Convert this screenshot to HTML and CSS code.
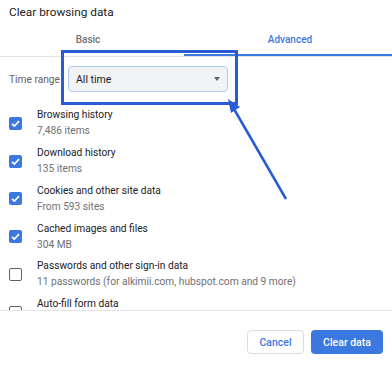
FILE: index.html
```html
<!DOCTYPE html>
<html lang="en">
<head>
  <meta charset="UTF-8" />
  <meta name="viewport" content="width=device-width, initial-scale=1.0"/>
  <title>Clear browsing data</title>
  <link rel="stylesheet" href="styles.css">
</head>
<body>
  <div class="dialog">
    <h1 class="title">Clear browsing data</h1>

    <div class="tabs">
      <div class="tab">Basic</div>
      <div class="tab active">Advanced</div>
    </div>

    <div class="range">
      <span class="range-label">Time range</span>
      <div class="select">
        <span>All time</span>
        <span class="caret"></span>
      </div>
    </div>

    <div class="list">
      <div class="row">
        <span class="box checked"><svg viewBox="0 0 13 13"><path d="M3 6.8l2.4 2.3 4.6-5" /></svg></span>
        <div class="text">
          <div class="name">Browsing history</div>
          <div class="sub">7,486 items</div>
        </div>
      </div>
      <div class="row">
        <span class="box checked"><svg viewBox="0 0 13 13"><path d="M3 6.8l2.4 2.3 4.6-5" /></svg></span>
        <div class="text">
          <div class="name">Download history</div>
          <div class="sub">135 items</div>
        </div>
      </div>
      <div class="row">
        <span class="box checked"><svg viewBox="0 0 13 13"><path d="M3 6.8l2.4 2.3 4.6-5" /></svg></span>
        <div class="text">
          <div class="name">Cookies and other site data</div>
          <div class="sub">From 593 sites</div>
        </div>
      </div>
      <div class="row">
        <span class="box checked"><svg viewBox="0 0 13 13"><path d="M3 6.8l2.4 2.3 4.6-5" /></svg></span>
        <div class="text">
          <div class="name">Cached images and files</div>
          <div class="sub">304 MB</div>
        </div>
      </div>
      <div class="row">
        <span class="box"></span>
        <div class="text">
          <div class="name">Passwords and other sign-in data</div>
          <div class="sub">11 passwords (for alkimii.com, hubspot.com and 9 more)</div>
        </div>
      </div>
      <div class="row">
        <span class="box"></span>
        <div class="text">
          <div class="name">Auto-fill form data</div>
          <div class="sub">&nbsp;</div>
        </div>
      </div>
    </div>

    <div class="footer">
      <button class="btn cancel">Cancel</button>
      <button class="btn primary">Clear data</button>
    </div>

    <!-- highlight drawn over the screenshot -->
    <svg class="annotation" width="392" height="365" viewBox="0 0 392 365">
      <rect x="62.5" y="51.5" width="174" height="52" />
      <line x1="286" y1="199" x2="234" y2="109" />
      <polygon points="228,99 240,107 231,113" />
    </svg>
  </div>
</body>
</html>
```

FILE: styles.css
```css
* {
  margin: 0;
  padding: 0;
  box-sizing: border-box;
  font-family: Roboto, 'Liberation Sans', sans-serif;
}

body {
  background: #fff;
  color: #202124;
}

.dialog {
  position: relative;
  width: 392px;
  height: 365px;
  overflow: hidden;
}

.title {
  height: 25px;
  padding: 4px 0 0 9px;
  font-size: 11.8px;
  font-weight: 400;
  line-height: 16px;
  color: #202124;
}

.tabs {
  display: flex;
  height: 32px;
  border-bottom: 1px solid #e3e4e6;
}

.tab {
  width: 184px;
  padding: 9px 8px 0 0;
  text-align: center;
  font-size: 10px;
  font-weight: 500;
  color: #6e7175;
}

.tab.active {
  flex: 1;
  padding: 9px 0 0 4px;
  color: #3b78e0;
  box-shadow: inset 0 -2px 0 #3b78e0;
}

.range {
  display: flex;
  align-items: center;
  margin-top: 9px;
  padding-left: 9px;
}

.range-label {
  width: 59px;
  font-size: 10.2px;
  color: #5f6368;
}

.select {
  display: flex;
  align-items: center;
  justify-content: space-between;
  width: 160px;
  height: 26px;
  padding: 0 7px 0 7px;
  background: #f1f3f4;
  border: 1px solid #b3cdf7;
  border-radius: 4px;
  font-size: 10.5px;
  color: #202124;
}

.caret {
  width: 0;
  height: 0;
  border-left: 3.5px solid transparent;
  border-right: 3.5px solid transparent;
  border-top: 4px solid #5f6368;
}

.list {
  height: 219px;
  padding-top: 12.6px;
  overflow: hidden;
  border-bottom: 1px solid #e3e4e6;
}

.row {
  display: flex;
  align-items: center;
  height: 37.75px;
  padding-left: 9px;
}

.box {
  width: 13px;
  height: 13px;
  margin-right: 15px;
  border: 1.5px solid #5f6368;
  border-radius: 2px;
  flex-shrink: 0;
}

.box.checked {
  background: #3b78e0;
  border: none;
}

.box svg {
  display: block;
  width: 13px;
  height: 13px;
}

.box path {
  fill: none;
  stroke: #fff;
  stroke-width: 1.6;
}

.name {
  font-size: 10.2px;
  line-height: 16px;
  color: #202124;
}

.sub {
  font-size: 10.2px;
  line-height: 16px;
  color: #6e7175;
}

.footer {
  display: flex;
  justify-content: flex-end;
  gap: 7px;
  padding: 19px 9px 0 0;
}

.btn {
  height: 24px;
  border-radius: 4px;
  font-size: 10.5px;
  font-weight: 500;
  cursor: pointer;
}

.cancel {
  width: 57px;
  background: #fff;
  color: #3b78e0;
  border: 1px solid #dadce0;
}

.primary {
  width: 72px;
  background: #3b78e0;
  color: #fff;
  border: none;
}

.annotation {
  position: absolute;
  left: 0;
  top: 0;
  pointer-events: none;
}

.annotation rect {
  fill: none;
  stroke: #2a5bd7;
  stroke-width: 3;
}

.annotation line {
  stroke: #2a5bd7;
  stroke-width: 2.5;
}

.annotation polygon {
  fill: #2a5bd7;
}
```
